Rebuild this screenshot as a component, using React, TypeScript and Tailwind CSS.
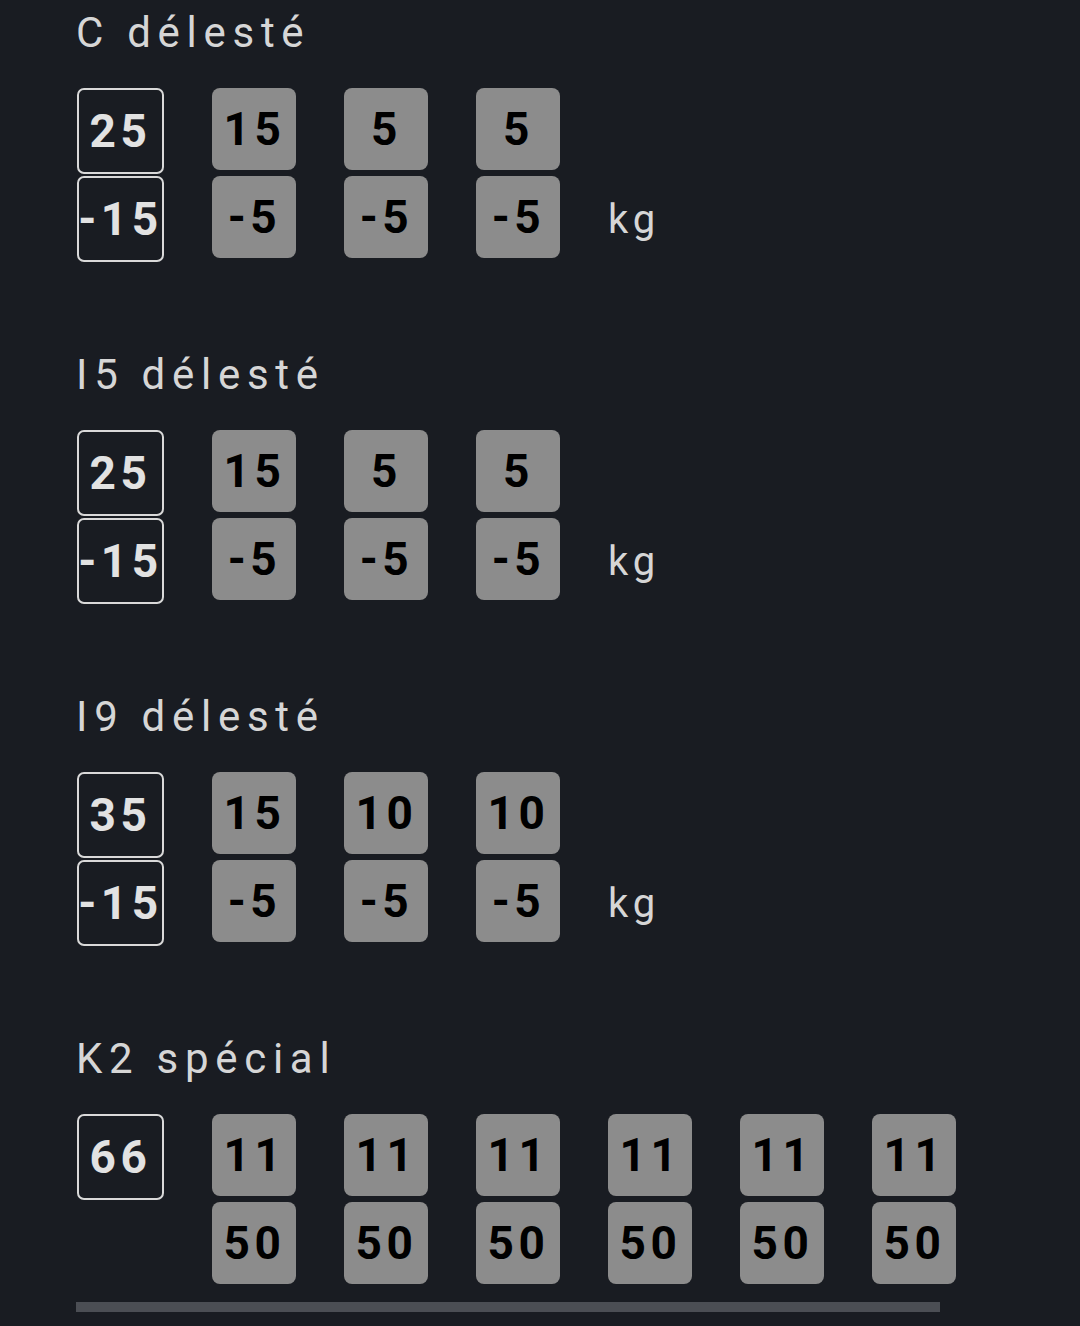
import React from "react";

type Section = {
    title: string;
    base: [string, string | null];
    plates: [string, string][];
    unit?: string;
};

const sections: Section[] = [
    { title: "C délesté", base: ["25", "-15"], plates: [["15", "-5"], ["5", "-5"], ["5", "-5"]], unit: "kg" },
    { title: "I5 délesté", base: ["25", "-15"], plates: [["15", "-5"], ["5", "-5"], ["5", "-5"]], unit: "kg" },
    { title: "I9 délesté", base: ["35", "-15"], plates: [["15", "-5"], ["10", "-5"], ["10", "-5"]], unit: "kg" },
    {
        title: "K2 spécial",
        base: ["66", null],
        plates: [["11", "50"], ["11", "50"], ["11", "50"], ["11", "50"], ["11", "50"], ["11", "50"]],
    },
];

function OutlineBox({ value }: { value: string }) {
    return (
        <div className="w-[87px] h-[86px] rounded-[7px] border-2 border-[#d9d9d9] flex items-center justify-center text-[#e2e2e2] text-[46px] font-bold tracking-[0.1em] whitespace-nowrap overflow-visible">
            {value}
        </div>
    );
}

function PlateBox({ value }: { value: string }) {
    return (
        <div className="w-[84px] h-[82px] rounded-[8px] bg-[#8c8c8c] flex items-center justify-center text-black text-[46px] font-bold tracking-[0.1em] pl-[1px] whitespace-nowrap">
            {value}
        </div>
    );
}

export default function App() {
    return (
        <div
            className="w-[1080px] h-[1326px] overflow-hidden bg-[#191c22] pl-[77px] pt-[8px]"
            style={{ fontFamily: "Roboto, 'Noto Sans', sans-serif" }}
        >
            {sections.map((s, i) => (
                <div key={i} className={i < sections.length - 1 ? "mb-[88px]" : ""}>
                    <h2 className="h-[50px] leading-[50px] text-[42px] text-[#d6d6d6] tracking-[0.16em] -ml-[1px]">
                        {s.title}
                    </h2>
                    <div className="mt-[30px] flex gap-[48px] items-start">
                        {/* fixed base weight */}
                        <div className="flex flex-col gap-[2px]">
                            <OutlineBox value={s.base[0]} />
                            {s.base[1] && <OutlineBox value={s.base[1]} />}
                        </div>
                        {/* removable plates */}
                        {s.plates.map((p, j) => (
                            <div key={j} className="flex flex-col gap-[6px]">
                                <PlateBox value={p[0]} />
                                <PlateBox value={p[1]} />
                            </div>
                        ))}
                        {s.unit && (
                            <div className="self-end h-[86px] flex items-center text-[40px] text-[#d6d6d6] tracking-[0.12em] pt-[2px]">
                                {s.unit}
                            </div>
                        )}
                    </div>
                </div>
            ))}
            {/* scroll indicator */}
            <div className="mt-[18px] -ml-[1px] w-[864px] h-[10px] bg-[#4b4e54]" />
        </div>
    );
}
